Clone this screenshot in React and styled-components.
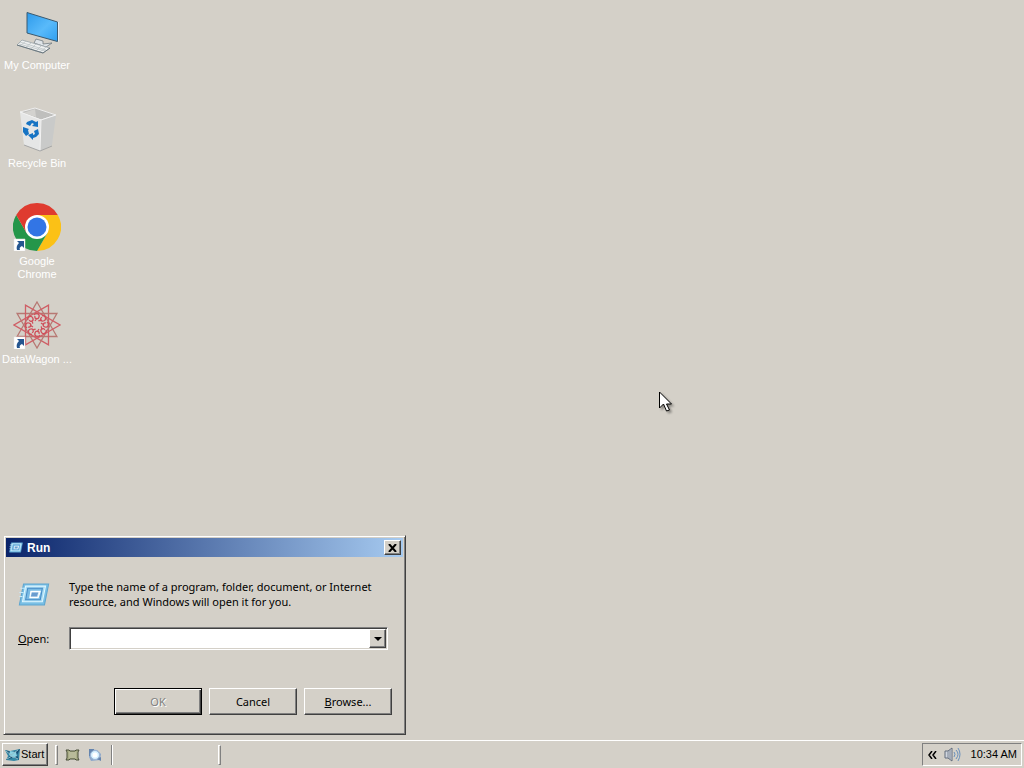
import React from "react";
import styled, { createGlobalStyle, css } from "styled-components";

const face = "#d4d0c8";
const shadow = "#808080";
const dark = "#404040";

const Global = createGlobalStyle`
  *, *::before, *::after { box-sizing: border-box; }
  body { margin: 0; background: ${face}; color: #000; font: 11px/13px "Liberation Sans", Arial, sans-serif; }
  button, input { font: inherit; color: inherit; border-radius: 0; margin: 0; }
  svg { display: block; flex: none; }
`;

const raised = css`
  background: ${face};
  border: 1px solid;
  border-color: #fff ${dark} ${dark} #fff;
  box-shadow: inset -1px -1px 0 ${shadow};
`;

const Screen = styled.div`
  min-height: 100vh;
  display: flex;
  flex-direction: column;
  overflow: hidden;
`;

const Desktop = styled.main`
  position: relative;
  flex: 1;
`;

const IconList = styled.nav`
  display: flex;
  flex-direction: column;
  width: 74px;
  padding-top: 7px;
`;

const Shortcut = styled.a`
  display: flex;
  flex-direction: column;
  align-items: center;
  gap: 4px;
  height: 98px;
  color: #fff;
  text-align: center;
  text-decoration: none;
`;

const ShortcutLabel = styled.span`
  max-width: ${(p) => (p.$narrow ? "50px" : "74px")};
  white-space: ${(p) => (p.$narrow ? "normal" : "nowrap")};
`;

const RunWindow = styled.section`
  position: absolute;
  left: 3px;
  bottom: 4px;
  width: 403px;
  height: 200px;
  padding: 1px;
  display: flex;
  flex-direction: column;
  background: ${face};
  border: 1px solid;
  border-color: ${face} ${dark} ${dark} ${face};
  box-shadow: inset 1px 1px 0 #fff, inset -1px -1px 0 ${shadow};
`;

const TitleBar = styled.header`
  display: flex;
  align-items: center;
  gap: 4px;
  height: 19px;
  margin: 1px;
  padding: 0 2px 0 3px;
  color: #fff;
  background: linear-gradient(90deg, #0a246a, #a6caf0);
`;

const Title = styled.h1`
  flex: 1;
  margin: 0;
  font-size: 12px;
  line-height: 16px;
`;

const CloseButton = styled.button`
  ${raised}
  width: 17px;
  height: 15px;
  padding: 0;
  display: grid;
  place-items: center;
`;

const Form = styled.form`
  flex: 1;
  display: flex;
  flex-direction: column;
  padding: 21px 12px 18px 13px;
  font: 11px/15px "Noto Sans", "Open Sans", sans-serif;
`;

const Row = styled.div`
  display: flex;
  align-items: center;
`;

const Lead = styled.div`
  width: 51px;
  flex: none;
`;

const Message = styled.p`
  margin: 0;
  white-space: nowrap;
`;

const FieldRow = styled(Row)`
  margin-top: 18px;
`;

const Combo = styled.div`
  display: flex;
  flex: 1;
  height: 23px;
  margin-right: 4px;
  padding: 1px;
  background: #fff;
  border: 1px solid;
  border-color: ${shadow} #fff #fff ${shadow};
  box-shadow: inset 1px 1px 0 ${dark}, inset -1px -1px 0 ${face};
`;

const ComboInput = styled.input`
  flex: 1;
  min-width: 0;
  margin: 1px;
  padding: 0 2px;
  border: 0;
  outline: 0;
  background: #fff;
`;

const ComboButton = styled.button`
  ${raised}
  width: 17px;
  padding: 0;
  display: grid;
  place-items: center;
`;

const Actions = styled.div`
  display: flex;
  justify-content: flex-end;
  gap: 7px;
  margin-top: auto;
`;

const ActionButton = styled.button`
  ${raised}
  width: 88px;
  height: 27px;
  padding: 0;

  &:disabled {
    color: ${shadow};
    text-shadow: 1px 1px 0 #fff;
    border-color: #000;
    box-shadow: inset 1px 1px 0 #fff, inset -1px -1px 0 ${dark}, inset -2px -2px 0 ${shadow};
  }
`;

const Taskbar = styled.footer`
  display: flex;
  align-items: center;
  height: 28px;
  padding: 0 2px;
  border-top: 1px solid #fff;
  margin-top: 1px;
`;

const StartButton = styled.button`
  ${raised}
  display: flex;
  align-items: center;
  width: 46px;
  height: 23px;
  padding: 0 0 0 2px;
`;

const Grip = styled.span`
  width: 3px;
  height: 20px;
  border: 1px solid;
  border-color: #fff ${shadow} ${shadow} #fff;
`;

const Divider = styled.span`
  width: 2px;
  height: 20px;
  border-left: 1px solid ${shadow};
  border-right: 1px solid #fff;
`;

const QuickLaunch = styled.div`
  display: flex;
  align-items: center;
  gap: 7px;
  padding: 0 8px 0 7px;
`;

const ToolButton = styled.button`
  display: block;
  padding: 0;
  border: 0;
  background: none;
`;

const StartArea = styled.div`
  display: flex;
  align-items: center;
  gap: 7px;
`;

const TaskArea = styled.div`
  width: 105px;
`;

const Tray = styled.div`
  display: flex;
  align-items: center;
  gap: 7px;
  height: 23px;
  margin-left: auto;
  padding: 0 4px 0 5px;
  border: 1px solid;
  border-color: ${shadow} #fff #fff ${shadow};
`;

const Clock = styled.time`
  margin-left: 3px;
`;

const Pointer = styled.svg`
  position: absolute;
  left: 658px;
  top: 391px;
  pointer-events: none;
  filter: drop-shadow(2px 2px 1px rgba(0, 0, 0, 0.35));
`;

const ArrowBadge = () => (
  <g>
    <path d="M1 36h11v12H1z" fill="#fff" stroke="#e4e4e4" strokeWidth=".5" />
    <path d="M4 38h7v7l-2-2c-2 1-3 2-2 4H4c-1-3 0-5 2-7z" fill="#24558f" />
  </g>
);

const ComputerIcon = () => (
  <svg width="48" height="48" viewBox="0 0 48 48" aria-hidden="true">
    <defs>
      <linearGradient id="screen" x1="0" y1="0" x2="1" y2="1">
        <stop offset="0" stopColor="#2d9aeb" />
        <stop offset=".55" stopColor="#59bafa" />
        <stop offset="1" stopColor="#2e9ff0" />
      </linearGradient>
    </defs>
    <path d="M23 32l7 2v3l9-1-6 4-12-4z" fill="#dfe4e8" stroke="#667178" strokeWidth=".7" />
    <path d="M14 5.500l30.500 9.500v19.500L14 26z" fill="url(#screen)" stroke="#3b5a70" strokeWidth="1" />
    <path d="M45 15v20l1-1V15z" fill="#e8edf0" />
    <path d="M9 33l28 8-7 5-26-8z" fill="#eef0f0" stroke="#9aa4a9" strokeWidth=".8" />
    <path d="M7 35l26 8M6 37l26 7M13 34l-6 5M18 36l-6 5M23 37l-6 6M28 39l-6 6M33 40l-7 6" fill="none" stroke="#b5bdc0" strokeWidth=".7" />
    <path d="M4 38l26 8 7-5" fill="none" stroke="#68757c" />
  </svg>
);

const RecycleIcon = () => (
  <svg width="48" height="48" viewBox="0 0 48 48" aria-hidden="true">
    <path d="M7 7l15-4 21 7-15 5z" fill="#bfbfbd" stroke="#eee" />
    <path d="M10 8l12-4 1 8z" fill="#d3d2cf" />
    <path d="M7 7l21 8-1 31-16-6z" fill="#e5e6e6" />
    <path d="M28 15l15-5-4 30-12 6z" fill="#c9cac9" />
    <path d="M7 7l21 8 15-5M28 15l-1 31" fill="none" stroke="#f2f2f2" />
    <path d="M11 40l16 6 12-5" fill="none" stroke="#a5a6a6" />
    <g fill="#1673c3">
      <path d="M14 17l5-2 4 2 2-1v6l-6-1 2-2-2-1-2 3-4-2z" />
      <path d="M10 22l6 2-1 1 1 4-3 2-3-4z" />
      <path d="M25 24l1 5-3 3-3 1v2l-5-5 5-2v2l2-1-1-3z" />
    </g>
  </svg>
);

const ChromeIcon = () => (
  <svg width="48" height="48" viewBox="0 0 48 48" aria-hidden="true">
    <path d="M24 12h20.785A24 24 0 0 1 24 48l10.392-18z" fill="#fbc116" />
    <path d="M13.608 30L3.215 12A24 24 0 0 0 24 48l10.392-18z" fill="#24964a" />
    <path d="M3.215 12A24 24 0 0 1 44.785 12H24L13.608 30z" fill="#df3b2f" />
    <circle cx="24" cy="24" r="12" fill="#fff" />
    <circle cx="24" cy="24" r="9.500" fill="#3275e5" />
    <ArrowBadge />
  </svg>
);

const WagonIcon = () => (
  <svg width="48" height="48" viewBox="0 0 48 48" aria-hidden="true">
    <g fill="none" strokeWidth="1.300">
      {[0, 30, 60, 90].map((angle) => (
        <polygon
          key={angle}
          points="24,1 43.900,35.500 4.100,35.500"
          stroke={angle % 60 ? "#cf5f66" : "#b77873"}
          transform={`rotate(${angle} 24 24)`}
        />
      ))}
      {Array.from({ length: 8 }, (_, i) => (
        <path key={i} d="M21 14c2-3 6-1 5 2s-5 2-4-1M24 17l-2 3" stroke="#cf4f5a" transform={`rotate(${i * 45} 24 24)`} />
      ))}
    </g>
    <ArrowBadge />
  </svg>
);

const RunIcon = ({ width, height }) => (
  <svg width={width} height={height} viewBox="0 0 30 22" aria-hidden="true">
    <path d="M5 1h24l-4 20H1z" fill="#79bfe5" stroke="#5ea6d0" />
    <path d="M7 3h19l-3 15H4z" fill="#a7daf2" stroke="#e1f8ff" />
    <path d="M9 5h14l-2 11H7z" fill="#78bbe4" stroke="#468bc6" />
    <path d="M12 8h9l-2 6h-8z" fill="#dcecf7" stroke="#fff" />
    <path d="M13 9h6l-1 4h-6z" fill="#699ccf" />
    <path d="M2 5h5M1 9h4M1 13h3" stroke="#c8eafa" />
  </svg>
);

const FlagIcon = () => (
  <svg width="16" height="14" viewBox="0 0 16 14" aria-hidden="true">
    <path d="M0 2l5 1 10-2-1 11-5 1-8-1 2-4z" fill="#3488a5" />
    <path d="M1 2c4 3 9 2 14-1l-3 6 2 5c-4-3-8-2-13 0l4-4z" fill="#174e73" />
    <path d="M5 3l6 1 1 4-4 2-4-3z" fill="#8bd2e3" />
    <path d="M1 3l5 4 7-5M2 11l5-3 6 3" fill="none" stroke="#8fbfcb" />
  </svg>
);

const NoteIcon = () => (
  <svg width="15" height="14" viewBox="0 0 15 14" aria-hidden="true">
    <path d="M1 2h3l1 1h5l1-1h3l-1 2v6l1 2h-3l-1-1H5l-1 1H1l1-2V4z" fill="#aaae87" stroke="#494e39" />
    <path d="M4 4h7v6H4z" fill="#b9bb9a" />
  </svg>
);

const SearchIcon = () => (
  <svg width="16" height="16" viewBox="0 0 16 16" aria-hidden="true">
    <path d="M2 2l8 1 4 4-1 6-9 1-2-4z" fill="#8ba7cb" />
    <path d="M2 2h5v3H4v4H2zM10 12l4-2v4z" fill="#6484ae" />
    <circle cx="8" cy="8" r="4.500" fill="#d8f2ff" stroke="#9db5d5" />
    <circle cx="8" cy="8" r="2.500" fill="#fff" />
  </svg>
);

const SpeakerIcon = () => (
  <svg width="17" height="15" viewBox="0 0 17 15" aria-hidden="true">
    <path d="M1 4h3l4-3v13l-4-3H1z" fill="#d1d6df" stroke="#626c7c" />
    <path d="M4 4v7M6 3v9" stroke="#7a8493" />
    <path d="M10 5q2 2 0 5M12 3q4 4 0 9M14 1q4 6 0 13" fill="none" stroke="#6990bd" />
  </svg>
);

export default function App() {
  return (
    <Screen>
      <Global />
      <Desktop>
        <IconList aria-label="Desktop">
          <Shortcut href="#computer"><ComputerIcon /><ShortcutLabel>My Computer</ShortcutLabel></Shortcut>
          <Shortcut href="#recycle"><RecycleIcon /><ShortcutLabel>Recycle Bin</ShortcutLabel></Shortcut>
          <Shortcut href="#chrome"><ChromeIcon /><ShortcutLabel $narrow>Google Chrome</ShortcutLabel></Shortcut>
          <Shortcut href="#datawagon"><WagonIcon /><ShortcutLabel>DataWagon ...</ShortcutLabel></Shortcut>
        </IconList>

        <RunWindow role="dialog" aria-labelledby="run-title">
          <TitleBar>
            <RunIcon width={14} height={11} />
            <Title id="run-title">Run</Title>
            <CloseButton type="button" aria-label="Close">
              <svg width="9" height="8" viewBox="0 0 9 8" aria-hidden="true">
                <path d="M1 0l7 8M8 0L1 8" stroke="#000" strokeWidth="2" />
              </svg>
            </CloseButton>
          </TitleBar>
          <Form onSubmit={(e) => e.preventDefault()}>
            <Row>
              <Lead><RunIcon width={32} height={23} /></Lead>
              <Message>
                Type the name of a program, folder, document, or Internet<br />
                resource, and Windows will open it for you.
              </Message>
            </Row>
            <FieldRow>
              <Lead><label htmlFor="open"><u>O</u>pen:</label></Lead>
              <Combo>
                <ComboInput id="open" type="text" autoComplete="off" />
                <ComboButton type="button" aria-label="Show recent commands">
                  <svg width="8" height="4" viewBox="0 0 8 4" aria-hidden="true"><path d="M0 0h8L4 4z" /></svg>
                </ComboButton>
              </Combo>
            </FieldRow>
            <Actions>
              <ActionButton type="submit" disabled>OK</ActionButton>
              <ActionButton type="button">Cancel</ActionButton>
              <ActionButton type="button"><u>B</u>rowse...</ActionButton>
            </Actions>
          </Form>
        </RunWindow>

        <Pointer width="14" height="22" viewBox="0 0 14 22" aria-hidden="true">
          <path d="M1.500 1v16l4-4 3 7 3-1-3-6h5z" fill="#fff" stroke="#000" />
        </Pointer>
      </Desktop>

      <Taskbar>
        <StartArea>
          <StartButton type="button"><FlagIcon />Start</StartButton>
          <Grip />
        </StartArea>
        <QuickLaunch>
          <ToolButton type="button" aria-label="Show desktop"><NoteIcon /></ToolButton>
          <ToolButton type="button" aria-label="Search"><SearchIcon /></ToolButton>
        </QuickLaunch>
        <Divider />
        <TaskArea />
        <Grip />
        <Tray>
          <svg width="9" height="8" viewBox="0 0 9 8" aria-hidden="true">
            <path d="M4 0L1 4l3 4M8 0L5 4l3 4" fill="none" stroke="#000" strokeWidth="1.500" />
          </svg>
          <SpeakerIcon />
          <Clock>10:34 AM</Clock>
        </Tray>
      </Taskbar>
    </Screen>
  );
}
